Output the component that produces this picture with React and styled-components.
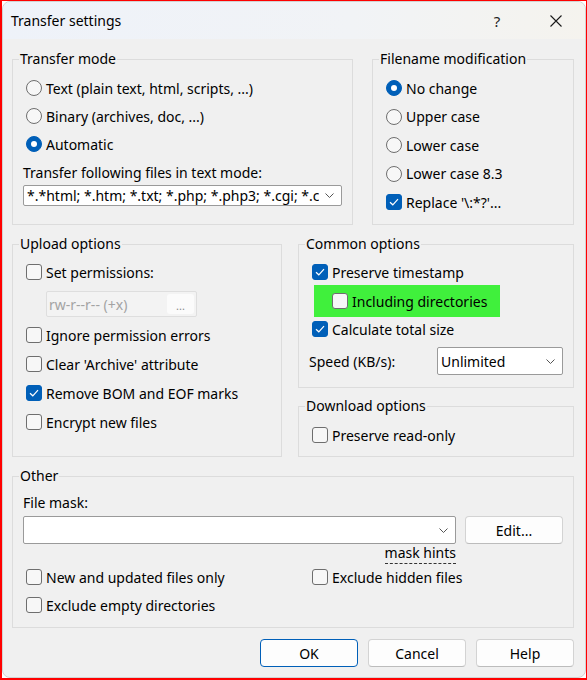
import React from "react";
import styled, { createGlobalStyle } from "styled-components";

const UI_FONT = `"Noto Sans", "Open Sans", sans-serif`;

const GlobalStyle = createGlobalStyle`
  html, body {
    margin: 0;
    padding: 0;
    background: #fff;
  }
  body {
    font-family: ${UI_FONT};
    font-size: 14px;
    color: #000;
  }
  * {
    box-sizing: border-box;
  }
`;

const Frame = styled.div`
  width: 587px;
  height: 680px;
  border: solid #ff0000;
  border-width: 1px 1px 2px 2px;
  background: #fff;
  display: flex;
`;

const Window = styled.div`
  flex: 1;
  display: flex;
  flex-direction: column;
  background: #f0f0f0;
  border: 1px solid #d2d2d2;
  border-radius: 8px;
  overflow: hidden;
`;

const TitleBar = styled.div`
  height: 37px;
  flex: none;
  display: flex;
  align-items: center;
  padding-left: 8px;
  background: linear-gradient(to right, #eef2f9, #f1f3f6 60%, #f5f3ee);
`;

const Title = styled.div`
  flex: 1;
  font-size: 14px;
`;

const CaptionButton = styled.div`
  width: ${(p) => p.$w}px;
  height: 100%;
  display: flex;
  align-items: center;
  justify-content: center;
  font-size: 15px;
  color: #222;
`;

const Body = styled.div`
  flex: 1;
  display: flex;
  flex-direction: column;
  padding: 10px 11px 0 9px;
`;

const Row = styled.div`
  display: grid;
  grid-template-columns: ${(p) => p.$cols};
  column-gap: ${(p) => p.$gap}px;
  height: ${(p) => p.$h}px;
  margin-top: ${(p) => p.$mt || 0}px;
`;

const Column = styled.div`
  display: flex;
  flex-direction: column;
  gap: 8px;
`;

const Group = styled.fieldset`
  margin: ${(p) => p.$mt || 0}px 0 0;
  padding: 0;
  min-width: 0;
  border: 1px solid #dcdcdc;
  height: ${(p) => p.$h}px;
`;

const Legend = styled.legend`
  margin-left: 6px;
  padding: 0 1px;
  font-size: 14px;
  line-height: 20px;
`;

const Inner = styled.div`
  display: flex;
  flex-direction: column;
  padding: ${(p) => p.$pad};
`;

const Option = styled.label`
  display: flex;
  align-items: center;
  gap: 4px;
  height: ${(p) => p.$h || 28}px;
  margin-left: ${(p) => p.$indent || 0}px;
  margin-top: ${(p) => p.$mt || 0}px;
  white-space: nowrap;
`;

const Box = styled.span`
  width: 16px;
  height: 16px;
  flex: none;
  border-radius: 3px;
  display: inline-flex;
  align-items: center;
  justify-content: center;
  background: ${(p) => (p.$on ? "#005fb8" : "#f7f7f7")};
  border: 1px solid ${(p) => (p.$on ? "#005fb8" : "#6e6e6e")};
`;

const Round = styled.span`
  width: 16px;
  height: 16px;
  flex: none;
  border-radius: 50%;
  display: inline-flex;
  align-items: center;
  justify-content: center;
  background: ${(p) => (p.$on ? "#005fb8" : "#f7f7f7")};
  border: 1px solid ${(p) => (p.$on ? "#005fb8" : "#6e6e6e")};
  &::after {
    content: "";
    display: ${(p) => (p.$on ? "block" : "none")};
    width: 6px;
    height: 6px;
    border-radius: 50%;
    background: #fff;
  }
`;

const Caption = styled.div`
  height: 20px;
  line-height: 20px;
  margin-top: ${(p) => p.$mt || 0}px;
  white-space: nowrap;
`;

const Combo = styled.div`
  height: 28px;
  flex: ${(p) => (p.$w ? "none" : 1)};
  width: ${(p) => (p.$w ? `${p.$w}px` : "auto")};
  min-width: 0;
  margin-top: ${(p) => p.$mt || 0}px;
  display: flex;
  align-items: center;
  gap: 6px;
  padding: 0 7px 0 3px;
  background: #fff;
  border: 1px solid #9a9a9a;
  border-radius: 2px;
`;

const ComboText = styled.span`
  flex: 1;
  min-width: 0;
  overflow: hidden;
  white-space: nowrap;
`;

const PermField = styled.div`
  width: 151px;
  height: 26px;
  margin: 5px 0 0 20px;
  display: flex;
  align-items: center;
  justify-content: space-between;
  padding: 0 2px;
  background: #f3f3f3;
  border: 1px solid #dedede;
  border-radius: 2px;
  color: #a3a3a3;
`;

const DotsButton = styled.span`
  width: 27px;
  height: 20px;
  display: flex;
  align-items: flex-end;
  justify-content: center;
  padding-bottom: 3px;
  background: #fbfbfb;
  border-radius: 3px;
  font-size: 11px;
  line-height: 11px;
  color: #8a8a8a;
`;

/* green marker behind the "Including directories" option */
const Highlight = styled.div`
  width: 186px;
  height: 32px;
  margin: -1px 0 -2px 2px;
  padding-left: 18px;
  display: flex;
  align-items: center;
  background: #40f03c;
`;

const SpeedRow = styled.div`
  display: flex;
  align-items: center;
  justify-content: space-between;
  margin: 4px 0 0 -3px;
  padding-right: 10px;
`;

const MaskRow = styled.div`
  display: flex;
  gap: 9px;
  margin-top: 3px;
`;

const HintRow = styled.div`
  height: 20px;
  display: flex;
  justify-content: flex-end;
  padding-right: 107px;
`;

const Hint = styled.span`
  line-height: 18px;
  border-bottom: 1px dashed #333;
`;

const OptionGrid = styled.div`
  display: grid;
  grid-template-columns: 286px 1fr;
  margin: -1px 0 0 3px;
`;

const Buttons = styled.div`
  display: flex;
  justify-content: flex-end;
  gap: 10px;
  margin-top: 11px;
`;

const Button = styled.div`
  width: 98px;
  height: 28px;
  display: flex;
  align-items: center;
  justify-content: center;
  background: #fdfdfd;
  border: 1px solid ${(p) => (p.$default ? "#005fb8" : "#d3d3d3")};
  border-bottom-color: ${(p) => (p.$default ? "#005fb8" : "#bcbcbc")};
  border-radius: 4px;
`;

function Check() {
  return (
    <svg width="10" height="8" viewBox="0 0 10 8">
      <path d="M1 4.2 L3.8 6.8 L9 1.2" fill="none" stroke="#fff" strokeWidth="1.2" />
    </svg>
  );
}

function Chevron() {
  return (
    <svg width="9" height="5" viewBox="0 0 9 5" style={{ flex: "none" }}>
      <path d="M0.5 0.5 L4.5 4.5 L8.5 0.5" fill="none" stroke="#555" strokeWidth="1" />
    </svg>
  );
}

function Checkbox({ on, children, ...rest }) {
  return (
    <Option {...rest}>
      <Box $on={on}>{on && <Check />}</Box>
      {children}
    </Option>
  );
}

function RadioOption({ on, children, ...rest }) {
  return (
    <Option {...rest}>
      <Round $on={on} />
      {children}
    </Option>
  );
}

export default function App() {
  return (
    <>
      <GlobalStyle />
      <Frame>
        <Window>
          <TitleBar>
            <Title>Transfer settings</Title>
            <CaptionButton $w={60}>?</CaptionButton>
            <CaptionButton $w={58}>
              <svg width="12" height="12" viewBox="0 0 12 12">
                <path d="M0.5 0.5 L11.5 11.5 M11.5 0.5 L0.5 11.5" stroke="#1a1a1a" strokeWidth="1.1" />
              </svg>
            </CaptionButton>
          </TitleBar>

          <Body>
            <Row $cols="341px 202px" $gap={19} $h={176}>
              <Group $h={176}>
                <Legend>Transfer mode</Legend>
                <Inner $pad="5px 10px 0 10px">
                  <RadioOption $indent={3}>Text (plain text, html, scripts, ...)</RadioOption>
                  <RadioOption $indent={3}>Binary (archives, doc, ...)</RadioOption>
                  <RadioOption $indent={3} on>Automatic</RadioOption>
                  <Caption $mt={5}>Transfer following files in text mode:</Caption>
                  <Combo $mt={2}>
                    <ComboText>
                      *.*html; *.htm; *.txt; *.php; *.php3; *.cgi; *.c; *.cpp; *.h; *.pas; *.bas; *.tex; *.pl; *.js; .htaccess
                    </ComboText>
                    <Chevron />
                  </Combo>
                </Inner>
              </Group>
              <Group $h={176}>
                <Legend>Filename modification</Legend>
                <Inner $pad="5px 10px 0 13px">
                  <RadioOption $h={28.5} on>No change</RadioOption>
                  <RadioOption $h={28.5}>Upper case</RadioOption>
                  <RadioOption $h={28.5}>Lower case</RadioOption>
                  <RadioOption $h={28.5}>Lower case 8.3</RadioOption>
                  <Checkbox $h={28.5} on>Replace '\:*?'...</Checkbox>
                </Inner>
              </Group>
            </Row>

            <Row $cols="270px 276px" $gap={16} $h={223} $mt={9}>
              <Group $h={223}>
                <Legend>Upload options</Legend>
                <Inner $pad="4px 10px 0 13px">
                  <Checkbox>Set permissions:</Checkbox>
                  <PermField>
                    <span>rw-r--r-- (+x)</span>
                    <DotsButton>...</DotsButton>
                  </PermField>
                  <Checkbox $mt={4}>Ignore permission errors</Checkbox>
                  <Checkbox $mt={1}>Clear 'Archive' attribute</Checkbox>
                  <Checkbox $mt={1} on>Remove BOM and EOF marks</Checkbox>
                  <Checkbox $mt={1}>Encrypt new files</Checkbox>
                </Inner>
              </Group>
              <Column>
                <Group $h={154}>
                  <Legend>Common options</Legend>
                  <Inner $pad="4px 0 0 13px">
                    <Checkbox on>Preserve timestamp</Checkbox>
                    <Highlight>
                      <Checkbox>Including directories</Checkbox>
                    </Highlight>
                    <Checkbox on>Calculate total size</Checkbox>
                    <SpeedRow>
                      <span>Speed (KB/s):</span>
                      <Combo $w={126}>
                        <ComboText>Unlimited</ComboText>
                        <Chevron />
                      </Combo>
                    </SpeedRow>
                  </Inner>
                </Group>
                <Group $h={61}>
                  <Legend>Download options</Legend>
                  <Inner $pad="5px 10px 0 13px">
                    <Checkbox>Preserve read-only</Checkbox>
                  </Inner>
                </Group>
              </Column>
            </Row>

            <Group $h={162} $mt={9}>
              <Legend>Other</Legend>
              <Inner $pad="7px 10px 0 10px">
                <Caption>File mask:</Caption>
                <MaskRow>
                  <Combo>
                    <ComboText />
                    <Chevron />
                  </Combo>
                  <Button>Edit...</Button>
                </MaskRow>
                <HintRow>
                  <Hint>mask hints</Hint>
                </HintRow>
                <OptionGrid>
                  <Checkbox>New and updated files only</Checkbox>
                  <Checkbox>Exclude hidden files</Checkbox>
                  <Checkbox>Exclude empty directories</Checkbox>
                </OptionGrid>
              </Inner>
            </Group>

            <Buttons>
              <Button $default>OK</Button>
              <Button>Cancel</Button>
              <Button>Help</Button>
            </Buttons>
          </Body>
        </Window>
      </Frame>
    </>
  );
}
